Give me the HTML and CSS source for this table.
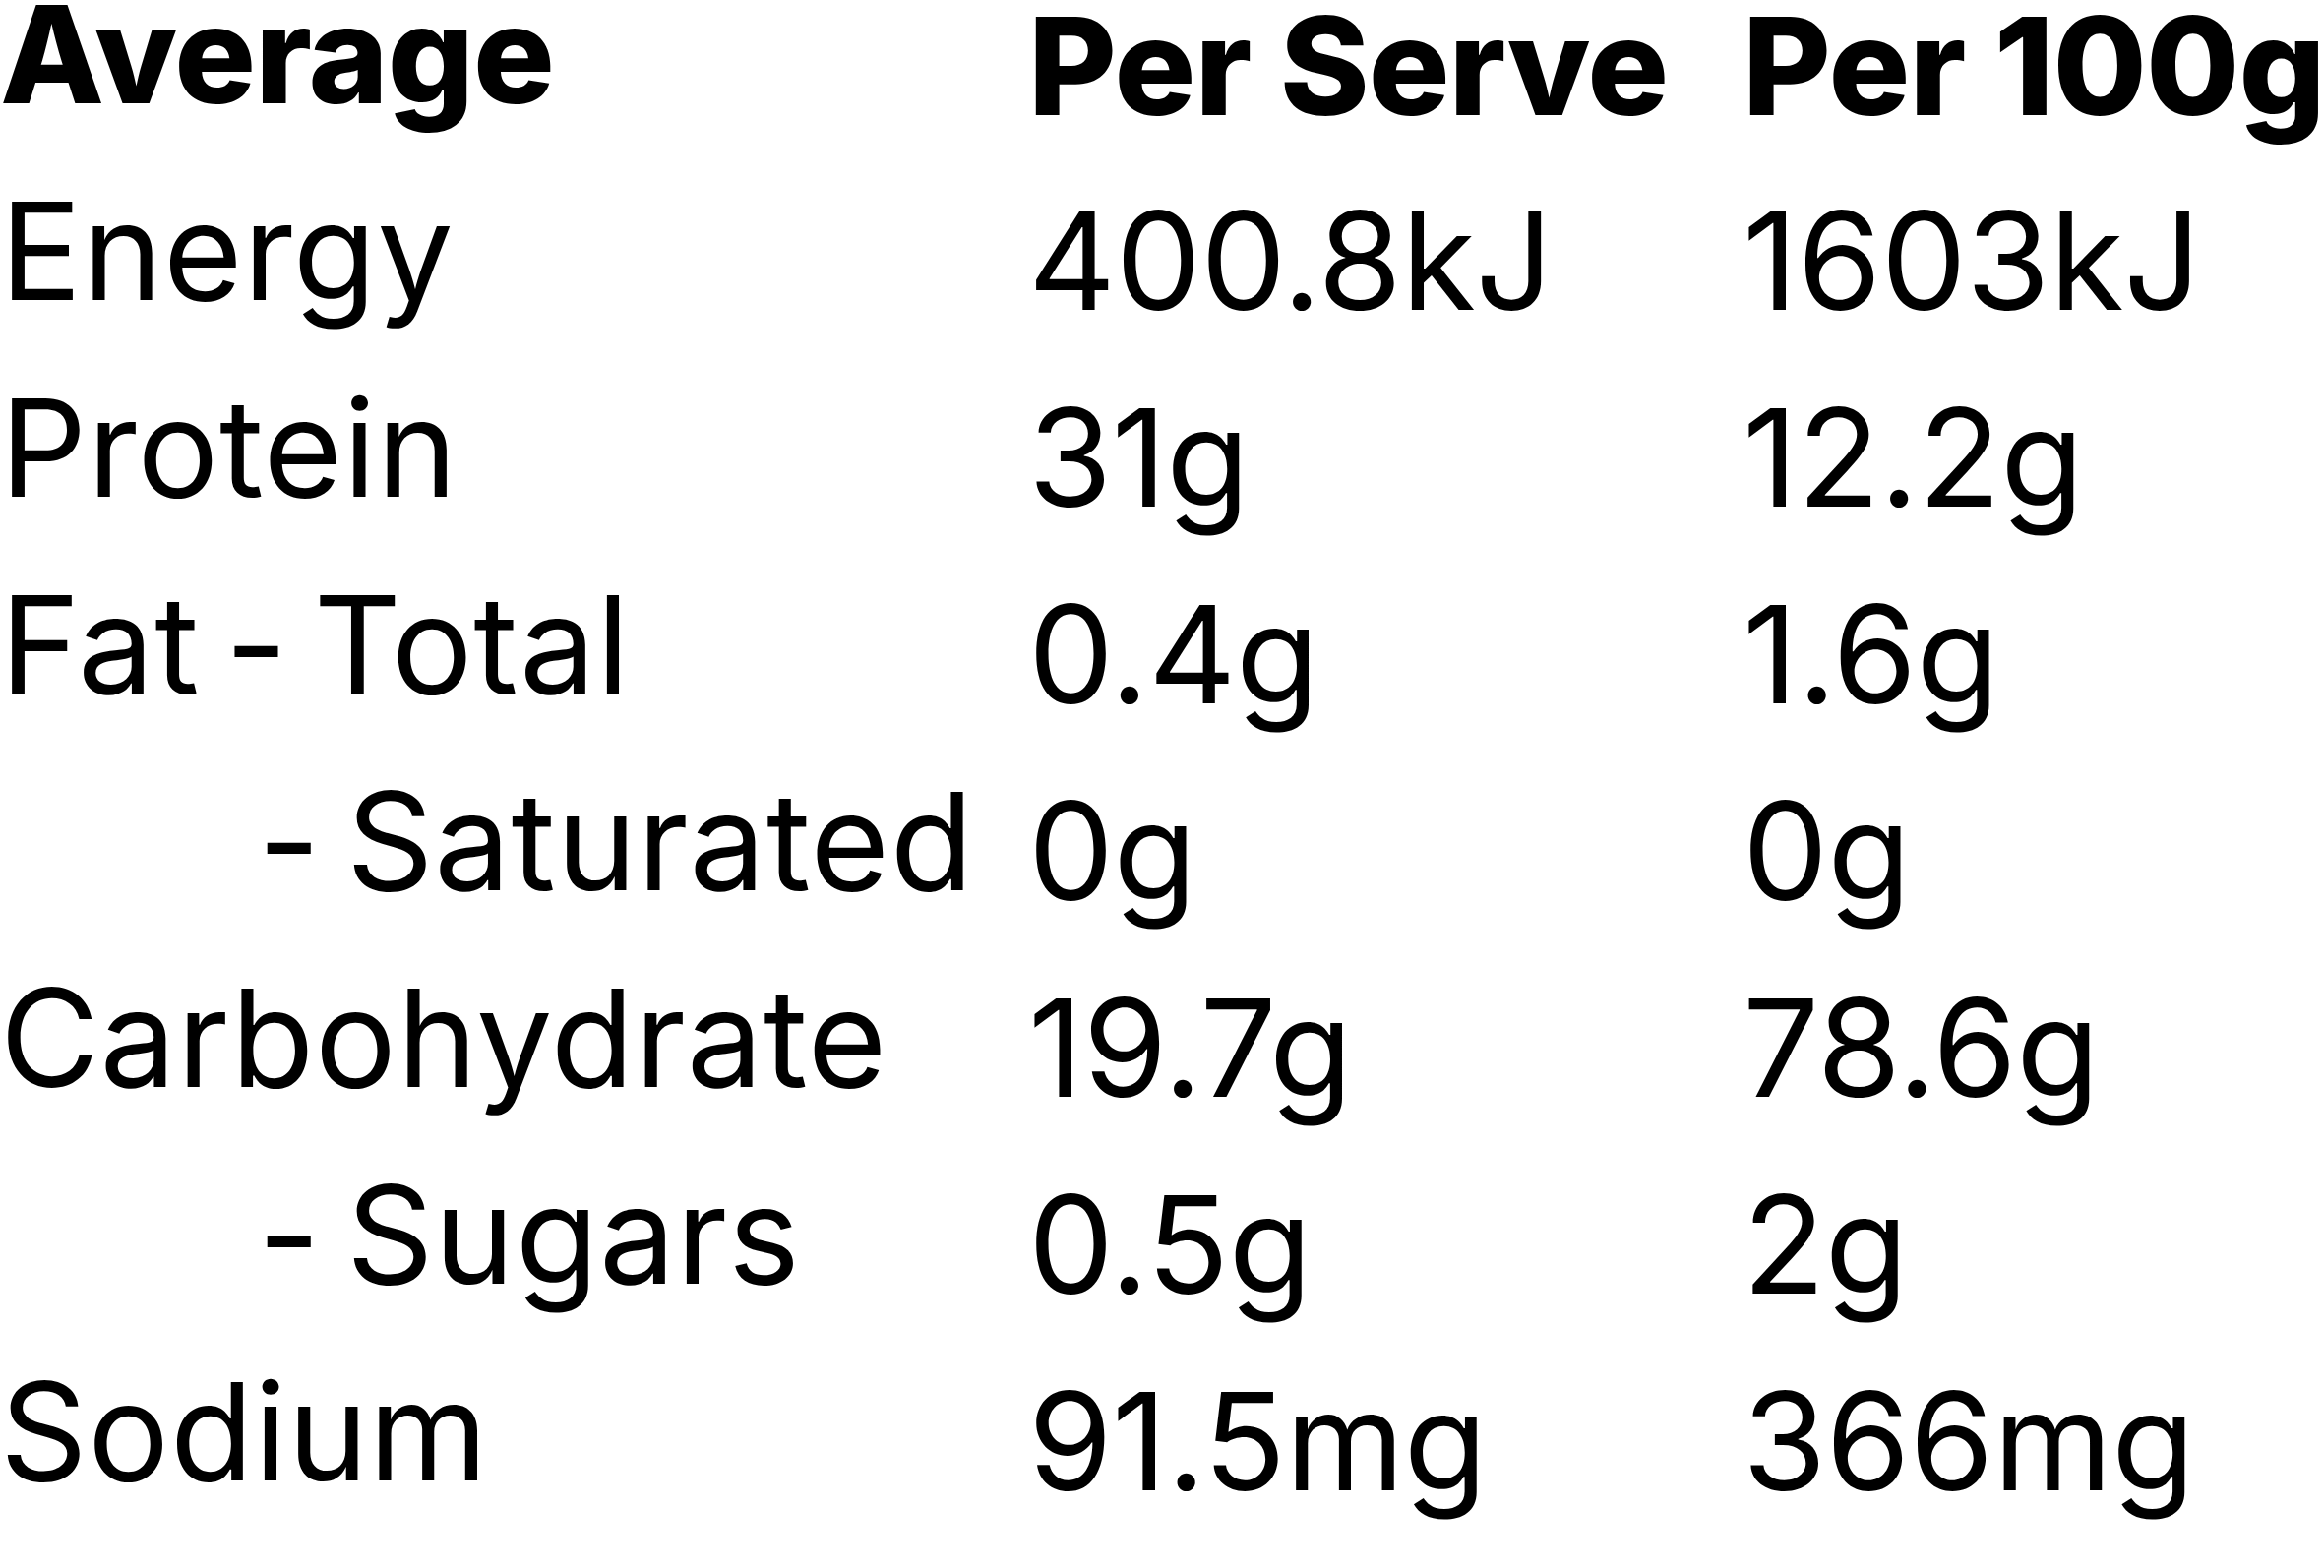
FILE: index.html
```html
<!DOCTYPE html>
<html lang="en">
<head>
<meta charset="utf-8">
<title>Nutrition Information</title>
<link rel="stylesheet" href="styles.css">
</head>
<body>
<div class="nutrition">
  <div class="cell label head">Average</div>
  <div class="cell value head">Per Serve</div>
  <div class="cell value head">Per 100g</div>

  <div class="cell label">Energy</div>
  <div class="cell value">400.8kJ</div>
  <div class="cell value">1603kJ</div>

  <div class="cell label">Protein</div>
  <div class="cell value">31g</div>
  <div class="cell value">12.2g</div>

  <div class="cell label">Fat - Total</div>
  <div class="cell value">0.4g</div>
  <div class="cell value">1.6g</div>

  <div class="cell label sub">- Saturated</div>
  <div class="cell value">0g</div>
  <div class="cell value">0g</div>

  <div class="cell label">Carbohydrate</div>
  <div class="cell value">19.7g</div>
  <div class="cell value">78.6g</div>

  <div class="cell label sub">- Sugars</div>
  <div class="cell value">0.5g</div>
  <div class="cell value">2g</div>

  <div class="cell label">Sodium</div>
  <div class="cell value">91.5mg</div>
  <div class="cell value">366mg</div>
</div>
</body>
</html>
```
FILE: styles.css
```css
html, body {
  margin: 0;
  padding: 0;
  background: #ffffff;
  overflow: hidden;
}

body {
  width: 2362px;
  height: 1594px;
  color: #000000;
  font-family: "Inter", "Lato", sans-serif;
}

.nutrition {
  display: grid;
  grid-template-columns: 1045px 726px 1fr;
  grid-auto-rows: 200px;
  font-size: 138px;
  line-height: 110px;
  font-weight: 400;
}

.cell {
  white-space: nowrap;
}

.label {
  letter-spacing: 0.8px;
  word-spacing: -14px;
}

.value {
  padding-top: 10px;
  letter-spacing: -0.5px;
}

.head {
  font-weight: 800;
  letter-spacing: -1px;
  word-spacing: 0;
}

.value.head {
  padding-top: 12px;
}

.sub {
  padding-left: 262px;
}
```
